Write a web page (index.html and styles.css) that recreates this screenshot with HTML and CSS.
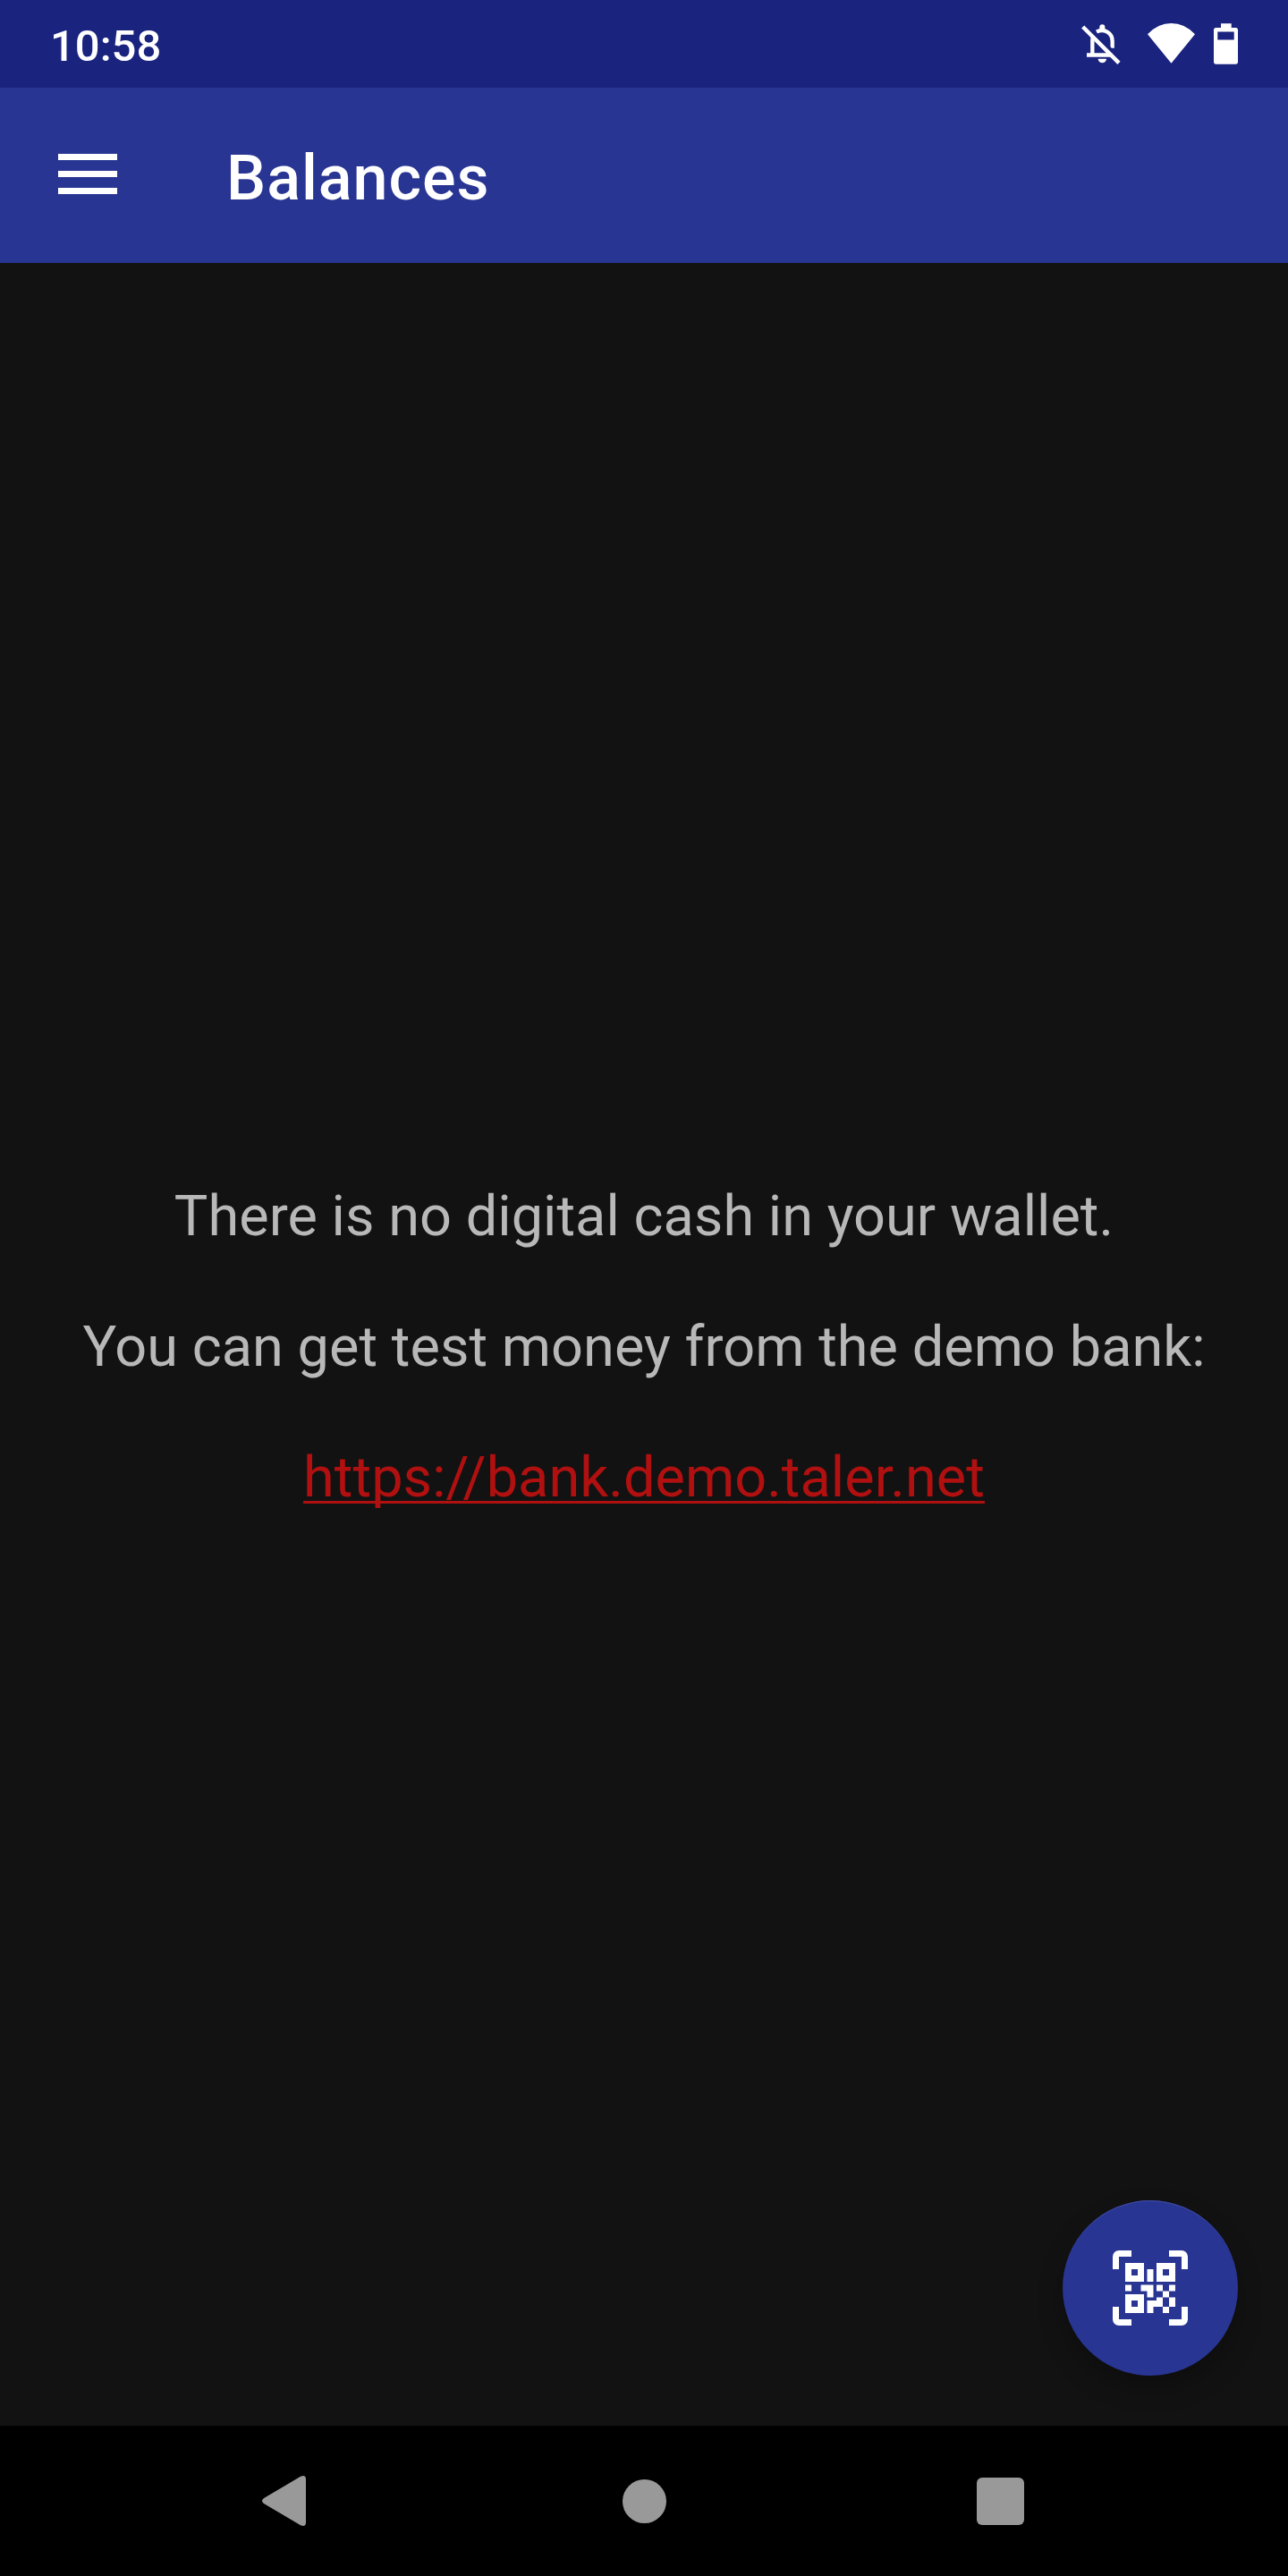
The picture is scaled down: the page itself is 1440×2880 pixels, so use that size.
FILE: index.html
```
<!DOCTYPE html>
<html lang="en">
<head>
<meta charset="utf-8">
<title>Balances</title>
<link rel="stylesheet" href="styles.css">
</head>
<body>
<div class="screen">
  <header class="status-bar">
    <span class="clock">10:58</span>
    <div class="status-icons">
      <svg class="icon-bell" viewBox="57 48 132 138" aria-label="Notifications off">
        <path d="M127 52a9 9 0 0 1 9 9v9h-18v-9a9 9 0 0 1 9-9z" fill="#fff"/>
        <path d="M108 77C132 64 161 80 161 108V131" fill="none" stroke="#fff" stroke-width="13"/>
        <path d="M75 154.500H160M94 152V106Q94 97 97 91" fill="none" stroke="#fff" stroke-width="13"/>
        <path d="M113 167h28a14 14 0 0 1-28 0z" fill="#fff"/>
        <path d="M67 45L188 166" stroke="#1a237e" stroke-width="7"/>
        <path d="M62 60L183 181" stroke="#fff" stroke-width="13.500"/>
      </svg>
      <svg class="icon-wifi" viewBox="0 0 53 45" aria-label="Wi-Fi">
        <path d="M0 12.300Q11.500 0 26.500 0T53 12.300L26.500 44.800z" fill="#fff"/>
      </svg>
      <svg class="icon-battery" viewBox="0 0 27 46" aria-label="Battery">
        <path fill-rule="evenodd" d="M8 .3h11.700V5H24.500Q27 5 27 7.500V43Q27 45.700 24.500 45.700H2.500Q0 45.700 0 43V7.500Q0 5 2.500 5H8zM4.300 9.500v9h18.400v-9z" fill="#fff"/>
      </svg>
    </div>
  </header>
  <div class="app-bar">
    <svg class="icon-menu" viewBox="0 0 66 45" aria-label="Menu">
      <path d="M0 0h66v7H0zM0 19h66v7H0zM0 38h66v7H0z" fill="#fff"/>
    </svg>
    <h1 class="title">Balances</h1>
  </div>
  <main class="content">
    <p class="message">There is no digital cash in your wallet.</p>
    <p class="message">You can get test money from the demo bank:</p>
    <a class="message link" href="#">https://bank.demo.taler.net</a>
    <button class="fab" aria-label="Scan QR code">
      <svg class="icon-qr" viewBox="0 0 24 24">
        <g fill="#fff">
          <path d="M2 0H6V2H2V6H0V2A2 2 0 0 1 2 0zM18 0H22A2 2 0 0 1 24 2V6H22V2H18zM0 18H2V22H6V24H2A2 2 0 0 1 0 22zM22 18H24V22A2 2 0 0 1 22 24H18V22H22z"/>
          <path fill-rule="evenodd" d="M4 4h6v6H4zM6 6v2h2V6zM14 4h6v6h-6zM16 6v2h2V6zM4 14h6v6H4zM6 16v2h2v-2z"/>
          <path d="M11 6h2v4h-2zM4 11h2v2H4zM9 11h4v4h-2v-2H9zM14 11h2v2h2v-2h2v2h-2v2h2v3h-2v2h-2v-2h-3v2h-2v-4h3v-1h2v-2h-2z"/>
        </g>
        <path d="M16 15h2v3h-2z" fill="#283593"/>
      </svg>
    </button>
  </main>
  <nav class="nav-bar">
    <svg class="nav-back" viewBox="0 0 49 56" aria-label="Back">
      <path d="M43 .8Q49-1.500 49 4V52Q49 57.500 43 55.200L2 31Q-2 28 2 25z" fill="#999"/>
    </svg>
    <span class="nav-home"></span>
    <span class="nav-recents"></span>
  </nav>
</div>
</body>
</html>
```
FILE: styles.css
```
* {
  box-sizing: border-box;
}

body {
  margin: 0;
  background: #121212;
  font-family: Roboto, sans-serif;
}

.screen {
  display: flex;
  flex-direction: column;
  width: 1440px;
  height: 2880px;
}

.status-bar {
  display: flex;
  align-items: center;
  justify-content: space-between;
  height: 98px;
  padding: 0 56px;
  background: #1a237e;
  color: #fff;
}

.clock {
  padding-top: 6px;
  font-size: 49px;
  font-weight: 500;
  line-height: 58px;
}

.status-icons {
  display: flex;
  align-items: flex-start;
  height: 46px;
}

.icon-bell {
  width: 44px;
  height: 46px;
  margin-right: 30px;
}

.icon-wifi {
  width: 53px;
  height: 45px;
  margin-right: 21px;
}

.icon-battery {
  width: 27px;
  height: 46px;
}

.app-bar {
  display: flex;
  align-items: center;
  height: 196px;
  padding-left: 65px;
  background: #283593;
  color: #fff;
}

.icon-menu {
  width: 66px;
  height: 45px;
  margin-right: 122px;
  margin-bottom: 3px;
}

.title {
  margin: 6px 0 0;
  font-size: 70px;
  font-weight: 500;
  line-height: 82px;
  letter-spacing: 1px;
}

.content {
  position: relative;
  display: flex;
  flex: 1;
  flex-direction: column;
  align-items: center;
  justify-content: center;
  gap: 72px;
  padding-top: 6px;
}

.message {
  margin: 0;
  color: #b8b8b8;
  font-size: 63px;
  line-height: 74px;
  letter-spacing: 0.05px;
  white-space: nowrap;
}

.link {
  color: #b01010;
  text-decoration: underline;
  text-decoration-thickness: 3px;
  text-decoration-skip-ink: none;
  text-underline-offset: 5px;
}

.fab {
  position: absolute;
  right: 56px;
  bottom: 56px;
  display: flex;
  align-items: center;
  justify-content: center;
  width: 196px;
  height: 196px;
  padding: 0;
  border: 0;
  border-radius: 50%;
  background: #283593;
  box-shadow: inset 0 2px 1px -1px #4450a5, 0 14px 28px rgba(0, 0, 0, 0.25);
}

.icon-qr {
  width: 84px;
  height: 84px;
}

.nav-bar {
  display: grid;
  grid-template-columns: 1fr 49px 1fr;
  align-items: center;
  height: 168px;
  padding: 0 295px 0 293px;
  column-gap: 0;
  background: #000;
}

.nav-bar {
  padding: 0 295px;
}

.nav-back {
  width: 49px;
  height: 56px;
  margin-left: -2px;
}

.nav-home {
  width: 49px;
  height: 49px;
  border-radius: 50%;
  background: #999;
}

.nav-recents {
  justify-self: end;
  width: 53px;
  height: 53px;
  border-radius: 6px;
  background: #999;
}
```
